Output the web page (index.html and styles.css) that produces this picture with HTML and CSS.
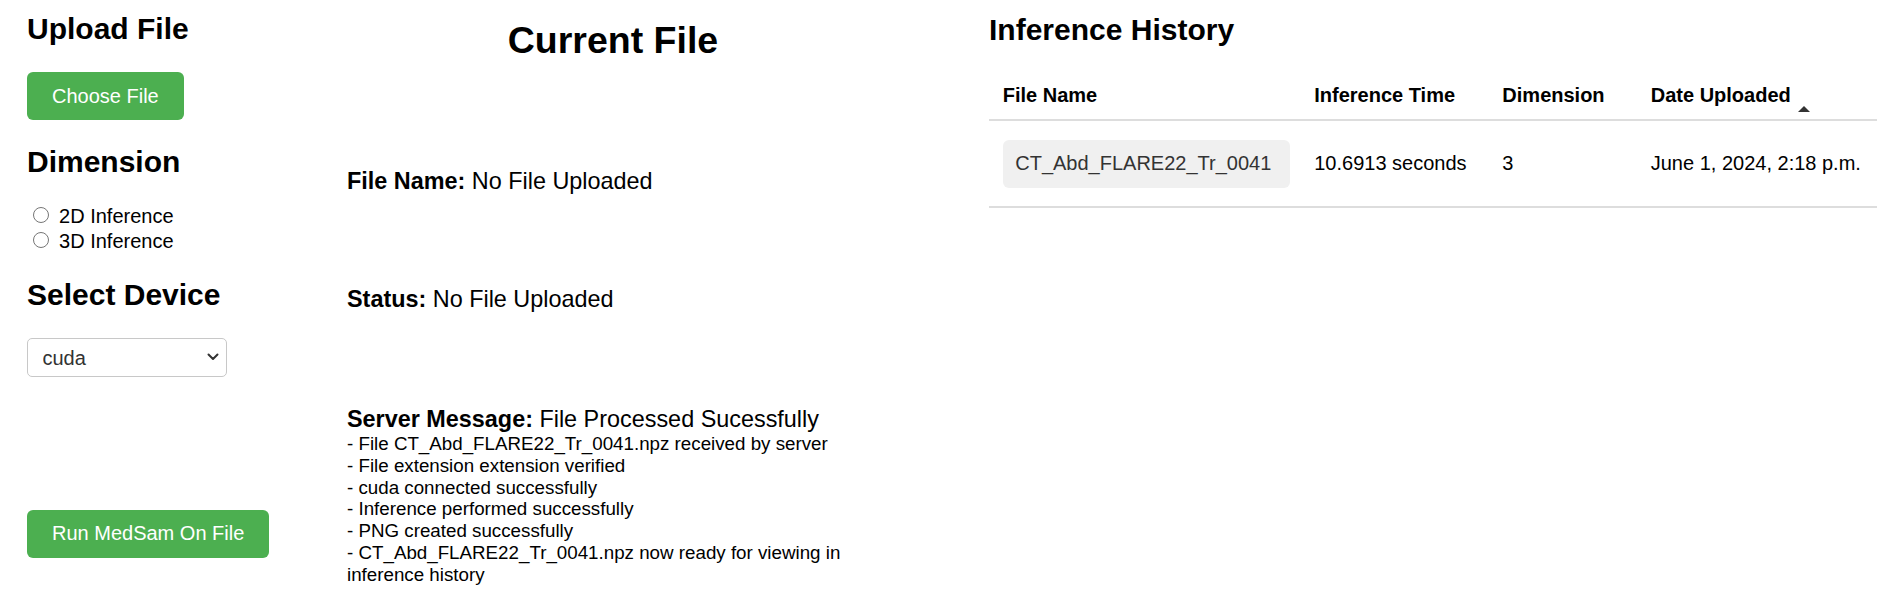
FILE: index.html
```html
<!DOCTYPE html>
<html lang="en">
<head>
<meta charset="utf-8">
<title>MedSam Inference</title>
<link rel="stylesheet" href="styles.css">
</head>
<body>
<div class="page">
  <section class="col-left">
    <h2 class="heading first">Upload File</h2>
    <button class="btn btn-choose" type="button">Choose File</button>
    <h2 class="heading after-btn">Dimension</h2>
    <div class="radios">
      <label class="radio-row"><input type="radio" name="dim" value="2"> 2D Inference</label>
      <label class="radio-row"><input type="radio" name="dim" value="3"> 3D Inference</label>
    </div>
    <h2 class="heading after-radios">Select Device</h2>
    <div class="select-wrap">
      <select class="device">
        <option>cuda</option>
        <option>cpu</option>
      </select>
      <svg class="chevron" width="12" height="8" viewBox="0 0 12 8"><path d="M1.5 1.5 L6 6 L10.5 1.5" fill="none" stroke="#333" stroke-width="2" stroke-linecap="round" stroke-linejoin="round"/></svg>
    </div>
    <button class="btn btn-run" type="button">Run MedSam On File</button>
  </section>

  <section class="col-mid">
    <h1 class="title">Current File</h1>
    <div class="info info-name"><strong>File Name:</strong> No File Uploaded</div>
    <div class="info info-status"><strong>Status:</strong> No File Uploaded</div>
    <div class="info info-server"><strong>Server Message:</strong> File Processed Sucessfully</div>
    <div class="messages">
      - File CT_Abd_FLARE22_Tr_0041.npz received by server<br>
      - File extension extension verified<br>
      - cuda connected successfully<br>
      - Inference performed successfully<br>
      - PNG created successfully<br>
      - CT_Abd_FLARE22_Tr_0041.npz now ready for viewing in inference history
    </div>
  </section>

  <section class="col-right">
    <h2 class="heading history">Inference History</h2>
    <table class="history-table">
      <colgroup>
        <col class="c1"><col class="c2"><col class="c3"><col class="c4">
      </colgroup>
      <thead>
        <tr>
          <th>File Name</th>
          <th>Inference Time</th>
          <th>Dimension</th>
          <th><span class="sortable">Date Uploaded<span class="sort-up"></span></span></th>
        </tr>
      </thead>
      <tbody>
        <tr>
          <td><span class="file-pill">CT_Abd_FLARE22_Tr_0041</span></td>
          <td>10.6913 seconds</td>
          <td>3</td>
          <td>June 1, 2024, 2:18 p.m.</td>
        </tr>
      </tbody>
    </table>
  </section>
</div>
</body>
</html>
```

FILE: styles.css
```css
html, body {
  margin: 0;
  padding: 0;
  background: #ffffff;
}

body {
  font-family: "Liberation Sans", Arial, Helvetica, sans-serif;
  color: #000;
  font-size: 20px;
}

.page {
  display: flex;
  align-items: flex-start;
  padding: 0 10px;
}

/* ---------- left column ---------- */
.col-left {
  width: 320px;
  padding-left: 17px;
  display: flex;
  flex-direction: column;
  align-items: flex-start;
}

.heading {
  font-size: 30px;
  line-height: 34.47px;
  font-weight: bold;
  margin: 0;
}

.heading.first { margin-top: 11.85px; }
.heading.after-btn { margin-top: 24.85px; }
.heading.after-radios { margin-top: 25.7px; }

.btn {
  background: #4caf50;
  color: #fff;
  border: none;
  border-radius: 6px;
  font-family: "Liberation Sans", Arial, sans-serif;
  font-size: 20px;
  line-height: 23px;
  height: 48px;
  padding: 0 25px;
  cursor: pointer;
}

.btn-choose { margin-top: 25.7px; }
.btn-run { margin-top: 132.5px; }

.radios {
  margin-top: 24.9px;
  display: flex;
  flex-direction: column;
}

.radio-row {
  display: block;
  height: 24.3px;
  line-height: 24.3px;
  font-size: 20px;
}

.radio-row input {
  width: 16px;
  height: 16px;
  margin: 2px 4.5px 0 6px;
  vertical-align: baseline;
}

.select-wrap {
  position: relative;
  margin-top: 25px;
  width: 200px;
  height: 39.5px;
}

.device {
  appearance: none;
  -webkit-appearance: none;
  width: 200px;
  height: 39.5px;
  box-sizing: border-box;
  border: 1.5px solid #c8c8c8;
  border-radius: 5px;
  background: #fff;
  color: #333;
  font-family: "Liberation Sans", Arial, sans-serif;
  font-size: 20px;
  padding: 0 0 0 14.5px;
}

.chevron {
  position: absolute;
  right: 8px;
  top: 15px;
  pointer-events: none;
}

/* ---------- middle column ---------- */
.col-mid {
  width: 532px;
  margin-right: 110px;
}

.title {
  font-size: 37.5px;
  line-height: 43.09px;
  font-weight: bold;
  text-align: center;
  margin: 19.36px 0 0;
}

.info {
  font-size: 23.4px;
  line-height: 26.9px;
}

.info strong { font-weight: bold; }

.info-name { margin-top: 105.7px; }
.info-status { margin-top: 91.1px; }
.info-server { margin-top: 92.5px; }

.messages {
  font-size: 18.75px;
  line-height: 21.83px;
  margin-top: 0.5px;
}

/* ---------- right column ---------- */
.col-right {
  width: 888px;
}

.heading.history { margin-top: 12.85px; }

.history-table {
  margin-top: 23.8px;
  width: 888px;
  border-collapse: collapse;
  table-layout: fixed;
  font-size: 20px;
}

.history-table col.c1 { width: 311.5px; }
.history-table col.c2 { width: 188.1px; }
.history-table col.c3 { width: 148.4px; }
.history-table col.c4 { width: 240px; }

.history-table th {
  text-align: left;
  font-weight: bold;
  line-height: 22.98px;
  padding: 12.5px 13.75px 12.4px;
  border-bottom: 2px solid #dddddd;
  white-space: nowrap;
}

.history-table td {
  line-height: 22.98px;
  padding: 18.75px 13.75px 18.25px;
  border-bottom: 2px solid #dddddd;
  vertical-align: middle;
  white-space: nowrap;
}

.sortable {
  position: relative;
}

.sort-up {
  position: absolute;
  left: calc(100% + 7px);
  top: 22.4px;
  width: 0;
  height: 0;
  border-left: 6px solid transparent;
  border-right: 6px solid transparent;
  border-bottom: 6px solid #333;
}

.file-pill {
  display: block;
  width: fit-content;
  background: #f0f0f0;
  color: #333;
  border-radius: 6px;
  padding: 12.5px 18.75px 12.5px 12.5px;
  line-height: 22.98px;
}
```
